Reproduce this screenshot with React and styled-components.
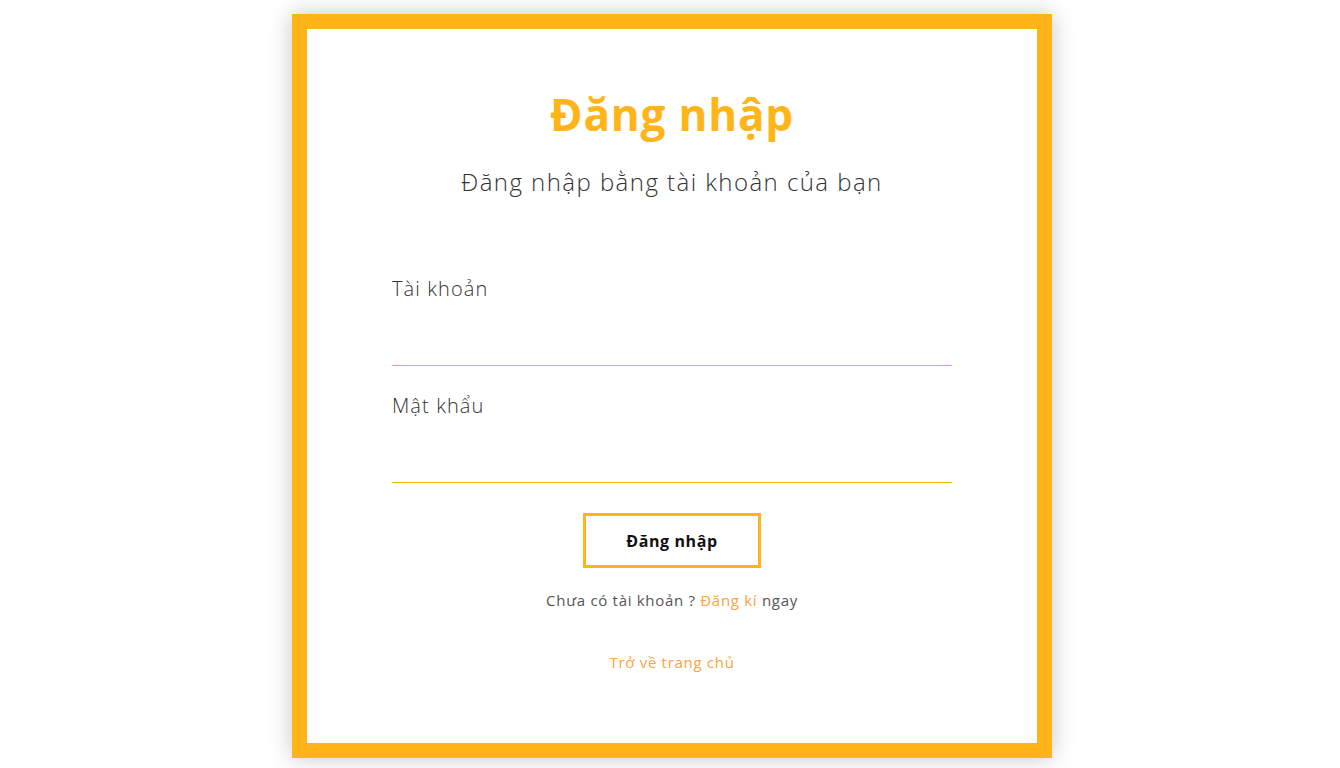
import React from "react";
import styled, { createGlobalStyle } from "styled-components";

const Global = createGlobalStyle`
  * { box-sizing: border-box; }
  html, body { margin: 0; padding: 0; background: #fff; }
  body { font-family: "Open Sans", "Noto Sans", sans-serif; }
`;

const Page = styled.div`
  display: flex;
  justify-content: center;
  padding: 14px 0 0 4px;
  min-height: 768px;
`;

const Card = styled.div`
  width: 760px;
  height: 744px;
  border: 15px solid #ffb517;
  background: #fff;
  box-shadow: 0 0 22px rgba(0, 0, 0, 0.22);
  padding: 57px 85px 0;
  display: flex;
  flex-direction: column;
  align-items: center;
`;

const Title = styled.h1`
  margin: 0;
  font-size: 44px;
  line-height: 56px;
  font-weight: 700;
  color: #ffb517;
  letter-spacing: 0.8px;
`;

const Subtitle = styled.p`
  margin: 25px 0 0;
  font-size: 24px;
  line-height: 30px;
  font-weight: 300;
  color: #333;
  letter-spacing: 1.45px;
`;

const Form = styled.form`
  width: 560px;
  margin-top: 80px;
  display: flex;
  flex-direction: column;
  align-items: center;
`;

const Field = styled.div`
  width: 100%;
  margin-top: ${(p) => (p.$first ? "0" : "28px")};
`;

const Label = styled.label`
  display: block;
  font-size: 20px;
  line-height: 24px;
  font-weight: 300;
  color: #333;
  letter-spacing: 1.1px;
`;

const Input = styled.input`
  display: block;
  width: 100%;
  height: 65px;
  border: none;
  border-bottom: 1px solid #ffb517;
  outline: none;
  background: transparent;
  font-size: 16px;
`;

const Button = styled.button`
  margin-top: 30px;
  width: 178px;
  height: 55px;
  border: 3px solid #ffb517;
  background: #fff;
  font-family: "Open Sans", "Noto Sans", sans-serif;
  font-size: 16px;
  font-weight: 700;
  color: #111;
  letter-spacing: 0.6px;
  cursor: pointer;
`;

const Note = styled.p`
  margin: ${(p) => p.$mt} 0 0;
  font-size: 15px;
  line-height: 20px;
  font-weight: 400;
  color: #555;
  text-align: center;
  letter-spacing: 0.7px;
`;

const Link = styled.a`
  color: #f9a43c;
  text-decoration: none;
`;

export default function App() {
  return (
    <>
      <Global />
      <Page>
        <Card>
          <Title>Đăng nhập</Title>
          <Subtitle>Đăng nhập bằng tài khoản của bạn</Subtitle>
          <Form onSubmit={(e) => e.preventDefault()}>
            <Field $first>
              <Label>Tài khoản</Label>
              <Input type="text" />
            </Field>
            <Field>
              <Label>Mật khẩu</Label>
              <Input type="password" />
            </Field>
            <Button type="submit">Đăng nhập</Button>
          </Form>
          <Note $mt="22px">
            Chưa có tài khoản ? <Link href="#">Đăng kí</Link> ngay
          </Note>
          <Note $mt="42px">
            <Link href="#">Trở về trang chủ</Link>
          </Note>
        </Card>
      </Page>
    </>
  );
}
